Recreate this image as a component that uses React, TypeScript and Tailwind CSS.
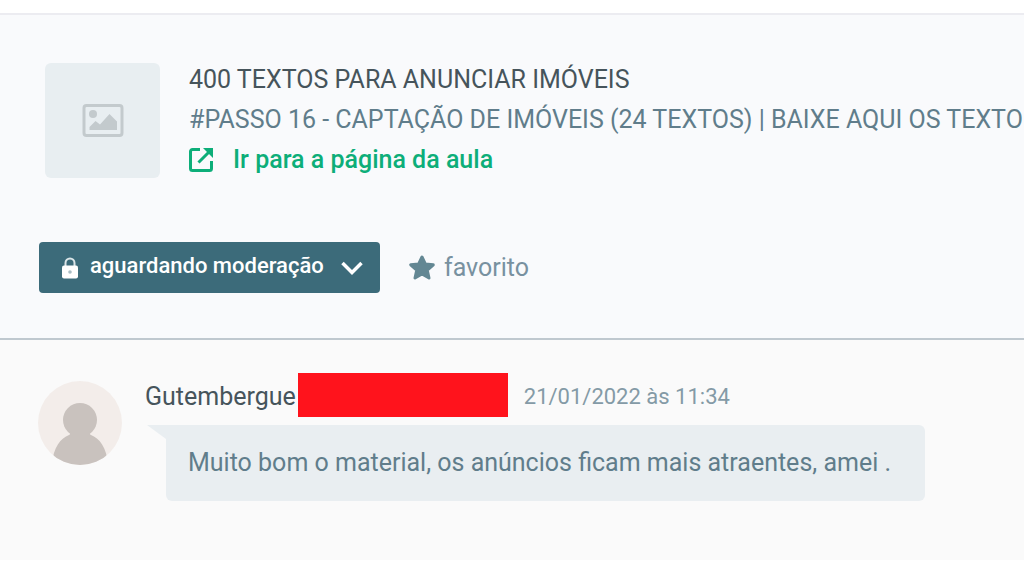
import React, { useState } from "react";

interface Lesson {
  course: string;
  title: string;
  link: string;
}

interface Comment {
  author: string;
  date: string;
  text: string;
}

const lesson: Lesson = {
  course: "400 TEXTOS PARA ANUNCIAR IMÓVEIS",
  title: "#PASSO 16 - CAPTAÇÃO DE IMÓVEIS (24 TEXTOS) | BAIXE AQUI OS TEXTO",
  link: "#aula",
};

const comments: Comment[] = [
  {
    author: "Gutembergue",
    date: "21/01/2022 às 11:34",
    text: "Muito bom o material, os anúncios ficam mais atraentes, amei .",
  },
];

function ImageIcon() {
  return (
    <svg className="h-9 w-11" viewBox="0 0 44 36" fill="none" aria-hidden="true">
      <rect x="3" y="2.500" width="38" height="30" rx="2.500" stroke="#c3cacd" strokeWidth="3" />
      <circle cx="12" cy="11" r="4" fill="#c3cacd" />
      <path d="M8.500 27v-3l6-6 4.500 3.500L28.500 11l7.500 7.500V27z" fill="#c3cacd" />
    </svg>
  );
}

function OpenIcon() {
  return (
    <svg className="h-6 w-6 shrink-0" viewBox="0 0 24 24" fill="none" stroke="#0dae79" strokeWidth="3" aria-hidden="true">
      <path d="M11 1.500H3.500a2 2 0 0 0-2 2v17a2 2 0 0 0 2 2h17a2 2 0 0 0 2-2V13" />
      <path d="M9.500 14.500L20 4" />
      <path d="M14 0h10v10z" fill="#0dae79" stroke="none" />
    </svg>
  );
}

function LockIcon() {
  return (
    <svg className="h-6 w-4" viewBox="0 0 16 24" aria-hidden="true">
      <path d="M3.500 11V7a4.500 4.500 0 0 1 9 0v4" fill="none" stroke="#dbe5e8" strokeWidth="2" />
      <rect y="9.500" width="16" height="13" rx="2" fill="#fff" />
      <circle cx="8" cy="16" r="1.800" fill="#a9bdc4" />
    </svg>
  );
}

function ChevronIcon() {
  return (
    <svg className="h-4 w-6" viewBox="0 0 24 16" fill="none" stroke="#fff" strokeWidth="3.500" aria-hidden="true">
      <path d="M2.500 3l9.500 9.500L21.500 3" />
    </svg>
  );
}

function StarIcon() {
  return (
    <svg className="h-7 w-7" viewBox="0 0 28 28" fill="#638793" stroke="#638793" strokeWidth="3" strokeLinejoin="round" aria-hidden="true">
      <path d="M14 3l3.300 7 8 .8-6 5.400 1.700 7.800-7-4-7 4 1.700-7.800-6-5.400 8-.8z" />
    </svg>
  );
}

function Avatar() {
  return (
    <svg className="h-[84px] w-[84px] shrink-0" viewBox="0 0 84 84" role="img" aria-label="Avatar">
      <defs>
        <clipPath id="avatar-clip">
          <circle cx="42" cy="42" r="42" />
        </clipPath>
      </defs>
      <g clipPath="url(#avatar-clip)">
        <rect width="84" height="84" fill="#f3edea" />
        <circle cx="42" cy="39" r="17" fill="#c9c2be" />
        <path d="M14 84C15 66 23 57 31 54q2-1 1-4h20q-1 3 1 4c8 3 16 12 17 30z" fill="#c9c2be" />
      </g>
    </svg>
  );
}

function LessonHeader() {
  const [status, setStatus] = useState("aguardando");
  const [favorite, setFavorite] = useState(false);

  return (
    <header className="border-y-2 border-t-[#ececf1] border-b-[#bfc8cf] bg-[#f9fafc] py-[45px]">
      <div className="flex gap-[29px] pl-[45px]">
        <div className="mt-[3px] flex h-[115px] w-[115px] shrink-0 items-center justify-center rounded-md bg-[#e8eef1]">
          <ImageIcon />
        </div>
        <div className="min-w-0 flex-1 text-[25px] leading-10 whitespace-nowrap">
          <h1 className="text-[#46545b]">{lesson.course}</h1>
          <p className="overflow-hidden text-[#607d8b]">{lesson.title}</p>
          <a href={lesson.link} className="flex items-center gap-5 font-medium text-[#0dae79]">
            <OpenIcon />
            Ir para a página da aula
          </a>
        </div>
      </div>

      <div className="mt-[62px] flex items-center gap-7 pl-[39px]">
        <div className="relative">
          <select
            aria-label="Status"
            value={status}
            onChange={(e) => setStatus(e.target.value)}
            className="block h-[51px] appearance-none rounded bg-[#3c6b7a] pr-14 pb-1 pl-[51px] text-[22px] font-medium text-white"
          >
            <option value="aguardando">aguardando moderação</option>
          </select>
          <div className="pointer-events-none absolute inset-0 flex items-center justify-between pr-4 pl-[23px]">
            <LockIcon />
            <ChevronIcon />
          </div>
        </div>
        <button
          type="button"
          aria-pressed={favorite}
          onClick={() => setFavorite(!favorite)}
          className="flex items-center gap-2 text-[25px] text-[#7891a0]"
        >
          <StarIcon />
          favorito
        </button>
      </div>
    </header>
  );
}

function CommentItem({ author, date, text }: Comment) {
  return (
    <article className="flex items-start gap-[23px] pl-[38px]">
      <div className="pt-2">
        <Avatar />
      </div>
      <div>
        <div className="flex items-end gap-0.5 leading-10">
          <h2 className="text-[25px] text-[#46545b]">{author}</h2>
          <div className="h-11 w-[210px] bg-[#ff131c]" />
          <time className="ml-3.5 text-[22px] text-[#849aa6]">{date}</time>
        </div>
        <div className="mt-2 flex items-start">
          <svg className="h-4 w-[21px]" viewBox="0 0 21 16" fill="#e9eef1" aria-hidden="true">
            <path d="M2 0h19v14z" />
          </svg>
          <p className="rounded-md rounded-tl-none bg-[#e9eef1] py-5 pr-[34px] pl-[22px] text-[25px] leading-9 text-[#607d8b]">
            {text}
          </p>
        </div>
      </div>
    </article>
  );
}

function App() {
  return (
    <main className="min-h-screen bg-white pt-[13px] font-[Roboto,sans-serif]">
      <LessonHeader />
      <section className="bg-[#fafafa] pt-[33px] pb-[59px]">
        {comments.map((comment, index) => (
          <CommentItem key={index} {...comment} />
        ))}
      </section>
    </main>
  );
}

export default App;
